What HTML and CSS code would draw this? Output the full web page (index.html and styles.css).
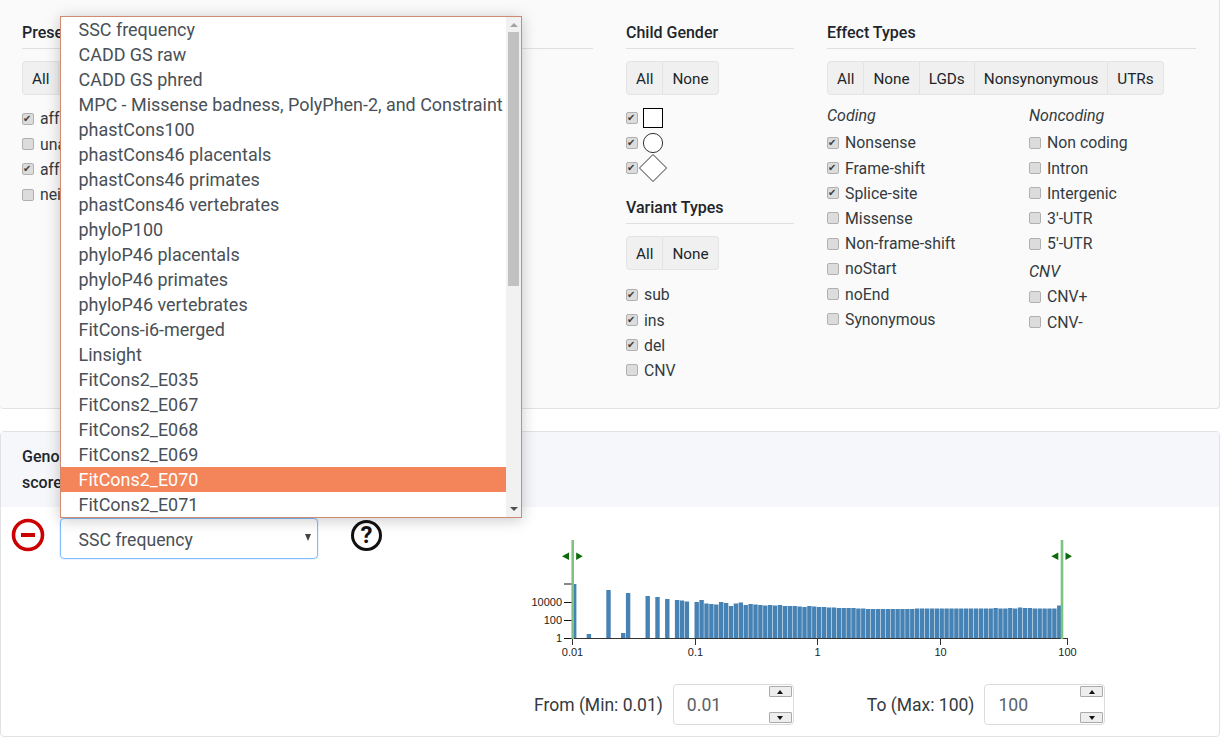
FILE: index.html
```html
<!DOCTYPE html>
<html lang="en">
<head>
    <meta charset="utf-8"/>
    <title>Genotype browser</title>
    <link rel="stylesheet" href="styles.css">
</head>
<body>

<div class="filters-card">
    <div class="col-present">
        <div class="block-title">Present in Child</div>
        <div class="btn-group">
            <button class="btn">All</button>
            <button class="btn">None</button>
        </div>
        <label class="check-row"><input type="checkbox" checked> affected only</label>
        <label class="check-row"><input type="checkbox"> unaffected only</label>
        <label class="check-row"><input type="checkbox" checked> affected and unaffected</label>
        <label class="check-row"><input type="checkbox"> neither</label>
    </div>

    <div class="col-gender">
        <div class="block-title">Child Gender</div>
        <div class="btn-group">
            <button class="btn">All</button>
            <button class="btn">None</button>
        </div>
        <div class="gender-list">
            <label class="check-row"><input type="checkbox" checked>
                <svg class="gender-icon" width="28" height="28" viewBox="0 0 28 28"><rect x="4.5" y="4.5" width="19" height="19" fill="#fff" stroke="#000" stroke-width="1"/></svg>
            </label>
            <label class="check-row"><input type="checkbox" checked>
                <svg class="gender-icon" width="28" height="28" viewBox="0 0 28 28"><circle cx="14" cy="14" r="9.6" fill="#fff" stroke="#333" stroke-width="1"/></svg>
            </label>
            <label class="check-row"><input type="checkbox" checked>
                <svg class="gender-icon" width="28" height="28" viewBox="0 0 28 28"><polygon points="14,0.5 27.5,14 14,27.5 0.5,14" fill="#fff" stroke="#333" stroke-width="1"/></svg>
            </label>
        </div>

        <div class="block-title variant-title">Variant Types</div>
        <div class="btn-group">
            <button class="btn">All</button>
            <button class="btn">None</button>
        </div>
        <div class="variant-list">
            <label class="check-row"><input type="checkbox" checked> sub</label>
            <label class="check-row"><input type="checkbox" checked> ins</label>
            <label class="check-row"><input type="checkbox" checked> del</label>
            <label class="check-row"><input type="checkbox"> CNV</label>
        </div>
    </div>

    <div class="col-effects">
        <div class="block-title">Effect Types</div>
        <div class="btn-group">
            <button class="btn">All</button>
            <button class="btn">None</button>
            <button class="btn">LGDs</button>
            <button class="btn">Nonsynonymous</button>
            <button class="btn">UTRs</button>
        </div>
        <div class="effect-columns">
            <div class="effect-col">
                <div class="effect-head">Coding</div>
                <label class="check-row"><input type="checkbox" checked> Nonsense</label>
                <label class="check-row"><input type="checkbox" checked> Frame-shift</label>
                <label class="check-row"><input type="checkbox" checked> Splice-site</label>
                <label class="check-row"><input type="checkbox"> Missense</label>
                <label class="check-row"><input type="checkbox"> Non-frame-shift</label>
                <label class="check-row"><input type="checkbox"> noStart</label>
                <label class="check-row"><input type="checkbox"> noEnd</label>
                <label class="check-row"><input type="checkbox"> Synonymous</label>
            </div>
            <div class="effect-col">
                <div class="effect-head">Noncoding</div>
                <label class="check-row"><input type="checkbox"> Non coding</label>
                <label class="check-row"><input type="checkbox"> Intron</label>
                <label class="check-row"><input type="checkbox"> Intergenic</label>
                <label class="check-row"><input type="checkbox"> 3'-UTR</label>
                <label class="check-row"><input type="checkbox"> 5'-UTR</label>
                <div class="effect-head cnv-head">CNV</div>
                <label class="check-row"><input type="checkbox"> CNV+</label>
                <label class="check-row"><input type="checkbox"> CNV-</label>
            </div>
        </div>
    </div>
</div>

<div class="scores-card">
    <div class="scores-head">Genomic<br>scores</div>
    <div class="scores-body">
        <div class="score-picker">
            <svg class="remove-icon" width="34" height="34" viewBox="0 0 34 34">
                <circle cx="17" cy="17" r="14.5" fill="none" stroke="#cc0000" stroke-width="3.6"/>
                <rect x="10" y="15" width="14" height="4" fill="#cc0000"/>
            </svg>
            <div class="score-select">SSC frequency<span class="select-caret"></span></div>
            <span class="help-icon">?</span>
        </div>
        <div class="score-chart">
            <svg id="histogram" width="600" height="125" viewBox="520 540 600 125"></svg>
            <div class="range-row">
                <span>From (Min: 0.01)</span>
                <div class="num-box">
                    <input type="text" value="0.01">
                    <div class="spin"><span class="spin-btn spin-up"></span><span class="spin-btn spin-down"></span></div>
                </div>
                <span class="range-to">To (Max: 100)</span>
                <div class="num-box">
                    <input type="text" value="100">
                    <div class="spin"><span class="spin-btn spin-up"></span><span class="spin-btn spin-down"></span></div>
                </div>
            </div>
        </div>
    </div>
</div>

<!-- open select list, lies over both cards -->
<div class="score-menu">
    <ul class="score-options">
        <li>SSC frequency</li>
        <li>CADD GS raw</li>
        <li>CADD GS phred</li>
        <li>MPC - Missense badness, PolyPhen-2, and Constraint</li>
        <li>phastCons100</li>
        <li>phastCons46 placentals</li>
        <li>phastCons46 primates</li>
        <li>phastCons46 vertebrates</li>
        <li>phyloP100</li>
        <li>phyloP46 placentals</li>
        <li>phyloP46 primates</li>
        <li>phyloP46 vertebrates</li>
        <li>FitCons-i6-merged</li>
        <li>Linsight</li>
        <li>FitCons2_E035</li>
        <li>FitCons2_E067</li>
        <li>FitCons2_E068</li>
        <li>FitCons2_E069</li>
        <li class="active">FitCons2_E070</li>
        <li>FitCons2_E071</li>
    </ul>
    <div class="menu-scroll">
        <span class="scroll-up"></span>
        <span class="scroll-thumb"></span>
        <span class="scroll-down"></span>
    </div>
</div>

<script src="histogram.js"></script>
</body>
</html>
```

FILE: styles.css
```css
*{
    box-sizing: border-box;
}

html, body{
    height: 737px;
    overflow: hidden;
}

body{
    position: relative;
    margin: 0;
    background: #fff;
    color: #212529;
    font-family: Roboto, "Liberation Sans", sans-serif;
    font-size: 16px;
    line-height: 24px;
}

/* top card */
.filters-card{
    display: flex;
    height: 409px;
    padding: 20px 23px 0 22px;
    background: #fafafa;
    border: 1px solid #e2e2e2;
    border-top: 0;
    border-left: 0;
    border-radius: 0 0 4px 4px;
}

.col-present{
    width: 571px;
    margin-right: 33px;
}

.col-present .btn-group{
    margin-bottom: 11.9px;
}

.col-gender{
    width: 168px;
    margin-right: 33px;
}

.col-effects{
    width: 369px;
}

.block-title{
    height: 29px;
    padding-top: 1px;
    margin-bottom: 12px;
    border-bottom: 1px solid #dfdfdf;
    font-weight: 500;
}

.variant-title{
    margin-top: 13.5px;
}

.btn-group{
    display: flex;
    height: 34px;
    margin-bottom: 10.5px;
}

.btn{
    height: 34px;
    padding: 2px 9px 0;
    background: #f0f0f0;
    border: 1px solid #e4e4e4;
    border-left-width: 0;
    color: #212529;
    font: 15.3px/30px Roboto, "Liberation Sans", sans-serif;
}

.btn:first-child{
    border-left-width: 1px;
    border-radius: 4px 0 0 4px;
}

.btn:last-child{
    border-radius: 0 4px 4px 0;
}

.check-row{
    display: flex;
    align-items: center;
    gap: 6px;
    height: 25.2px;
    color: #343a40;
    font-size: 15.8px;
}

.check-row input{
    appearance: none;
    flex: none;
    position: relative;
    width: 12px;
    height: 12px;
    margin: 0 0 1px;
    background: #dcdcdc;
    border: 1px solid #b0b0b0;
    border-radius: 2px;
}

.check-row input:checked::after{
    content: "\2714";
    position: absolute;
    left: 0;
    top: -1px;
    color: #3c3c3c;
    font: 10px/12px "DejaVu Sans", sans-serif;
}

.gender-icon{
    margin-left: -5px;
    overflow: visible;
}

.variant-list{
    margin-top: 13.2px;
}

.effect-columns{
    display: flex;
    margin-top: -1.4px;
}

.effect-col{
    flex: none;
    width: 202px;
}

.effect-head{
    height: 24px;
    margin-bottom: 2.7px;
    font-style: italic;
    color: #343a40;
}

.cnv-head{
    margin-top: 3px;
    margin-bottom: 0;
    height: 25px;
}

/* bottom card */
.scores-card{
    height: 306px;
    margin-top: 22px;
    background: #fff;
    border: 1px solid #e2e2e2;
    border-radius: 4px;
}

.scores-head{
    height: 75px;
    padding: 12px 21px;
    background: #f5f7fa;
    font-weight: 500;
    line-height: 26px;
}

.scores-body{
    display: flex;
    height: 229px;
}

.score-picker{
    display: flex;
    align-items: flex-start;
    flex: none;
    width: 519px;
    padding: 11px 0 0 10px;
}

.remove-icon{
    flex: none;
    margin-right: 15px;
}

.score-select{
    position: relative;
    width: 258px;
    height: 41px;
    padding: 1px 0 0 17.5px;
    margin-right: 33px;
    background: #fff;
    border: 1px solid #80bdff;
    border-radius: 4px;
    box-shadow: 0 0 0 1px rgba(128, 189, 255, .15);
    color: #495057;
    font-size: 17.6px;
    line-height: 41px;
}

.select-caret{
    position: absolute;
    right: 6px;
    top: 15px;
    border-left: 3px solid transparent;
    border-right: 3px solid transparent;
    border-top: 7px solid #444;
}

.help-icon{
    flex: none;
    width: 31px;
    height: 31px;
    margin-top: 2px;
    border: 3px solid #111;
    border-radius: 50%;
    color: #111;
    font-size: 24px;
    font-weight: 700;
    line-height: 25px;
    text-align: center;
}

.score-chart{
    flex: 1;
}

#histogram{
    display: block;
    margin-top: 33px;
    overflow: visible;
}

#histogram text{
    font-family: "Liberation Sans", sans-serif;
    font-size: 11px;
}

.range-row{
    display: flex;
    align-items: center;
    gap: 10px;
    margin-top: 19px;
    padding-left: 14px;
    color: #343a40;
    font-size: 17.5px;
}

.range-to{
    margin-left: 63px;
}

.num-box{
    display: flex;
    width: 121px;
    height: 41px;
    padding: 0 0 0 13px;
    border: 1px solid #dcdcdc;
    border-radius: 4px;
    background: #fff;
}

.num-box input{
    flex: 1;
    min-width: 0;
    padding: 0;
    border: 0;
    outline: 0;
    background: none;
    color: #5a6268;
    font: 17.6px Roboto, "Liberation Sans", sans-serif;
}

.spin{
    display: flex;
    flex-direction: column;
    justify-content: space-between;
    width: 24px;
    padding: 1px 1px 1px 0;
}

.spin-btn{
    display: flex;
    align-items: center;
    justify-content: center;
    height: 11px;
    background: #eee;
    border: 1px solid #aaa;
    border-radius: 1px;
}

.spin-up::after{
    content: "";
    border-left: 3px solid transparent;
    border-right: 3px solid transparent;
    border-bottom: 4px solid #111;
}

.spin-down::after{
    content: "";
    border-left: 3px solid transparent;
    border-right: 3px solid transparent;
    border-top: 4px solid #111;
}

/* open select list */
.score-menu{
    position: absolute;
    left: 60px;
    top: 16px;
    display: flex;
    width: 462px;
    height: 502px;
    background: #fff;
    border: 1px solid #d08a72;
    box-shadow: 0 2px 14px rgba(0, 0, 0, .22);
}

.score-options{
    flex: 1;
    min-width: 0;
    margin: 0;
    padding: 0;
    list-style: none;
    overflow: hidden;
    color: #495057;
    font-size: 17.95px;
}

.score-options li{
    height: 25px;
    padding-left: 17.5px;
    line-height: 25px;
    white-space: nowrap;
}

.score-options .active{
    background: #f4855b;
    color: #fff;
}

.menu-scroll{
    display: flex;
    flex-direction: column;
    align-items: center;
    flex: none;
    width: 15px;
    background: #f1f1f1;
}

.scroll-up{
    margin-top: 6px;
    border-left: 4px solid transparent;
    border-right: 4px solid transparent;
    border-bottom: 4px solid #a3a3a3;
}

.scroll-thumb{
    width: 11px;
    height: 254px;
    margin-top: 5px;
    background: #c1c1c1;
}

.scroll-down{
    margin-top: auto;
    margin-bottom: 6px;
    border-left: 4px solid transparent;
    border-right: 4px solid transparent;
    border-top: 4px solid #505050;
}
```

FILE: histogram.js
```js
// bar tops in px, 0 = empty bin
var tops = [
    584, 0, 0, 634, 0, 0, 0, 590, 0, 0,
    633, 593, 0, 0, 0, 596, 0, 597, 0, 599,
    0, 600, 600.5, 601.5, 0, 602, 600, 603.5, 604, 604.5,
    602, 603, 606, 603.5, 602.5, 605, 604, 604.5, 605, 605.5,
    605, 605.5, 605, 606, 606, 606, 606.5, 607, 606, 606.5,
    607, 607, 607.5, 607.5, 608, 608, 608, 608, 608.5, 608.5,
    609, 609, 609, 609, 609, 609, 609, 609, 609, 609,
    608.5, 608.5, 608.5, 608.5, 608.5, 608.5, 608.5, 608.5, 608.5, 608.5,
    608.5, 608.5, 608.5, 608.5, 608.5, 608.5, 608, 608.5, 608.5, 608,
    608.5, 607.5, 608, 608, 608.5, 608.5, 608.5, 608.5, 608.5, 605.5
];

var baseY = 638.5;
var html = "";

for (var i = 0; i < tops.length; i++) {
    if (tops[i] == 0) continue;
    html += '<rect x="' + (572 + i * 4.9) + '" y="' + tops[i] + '" width="4.4" height="' + (baseY - tops[i]) + '" fill="#4682b4"/>';
}

// left axis
html += '<path d="M572.5 584V638.5M564 584H572M564 602.5H572M564 620.5H572M564 638.5H572" stroke="#111" fill="none"/>';
var yLabels = [["10000", 606], ["100", 624], ["1", 642]];
for (var j = 0; j < yLabels.length; j++) {
    html += '<text x="562" y="' + yLabels[j][1] + '" text-anchor="end" fill="#222">' + yLabels[j][0] + '</text>';
}

// bottom axis
var xTicks = [[572.5, "0.01"], [695.5, "0.1"], [817.5, "1"], [940.5, "10"], [1067.5, "100"]];
html += '<path d="M572 638.5H1068" stroke="#333" fill="none"/>';
for (var k = 0; k < xTicks.length; k++) {
    html += '<path d="M' + xTicks[k][0] + ' 638V645" stroke="#333" fill="none"/>';
    html += '<text x="' + xTicks[k][0] + '" y="656" text-anchor="middle" fill="#222">' + xTicks[k][1] + '</text>';
}

// range handles
var handles = [572.7, 1062];
for (var h = 0; h < handles.length; h++) {
    var x = handles[h];
    html += '<line x1="' + x + '" y1="540" x2="' + x + '" y2="639" stroke="#7cc47f" stroke-width="2.6"/>';
    html += '<polygon points="' + (x - 3.7) + ',552.5 ' + (x - 3.7) + ',560 ' + (x - 10.7) + ',556.2" fill="#0b6b0b"/>';
    html += '<polygon points="' + (x + 3.5) + ',552.5 ' + (x + 3.5) + ',560 ' + (x + 10) + ',556.2" fill="#0b6b0b"/>';
}

document.getElementById("histogram").innerHTML = html;
```
